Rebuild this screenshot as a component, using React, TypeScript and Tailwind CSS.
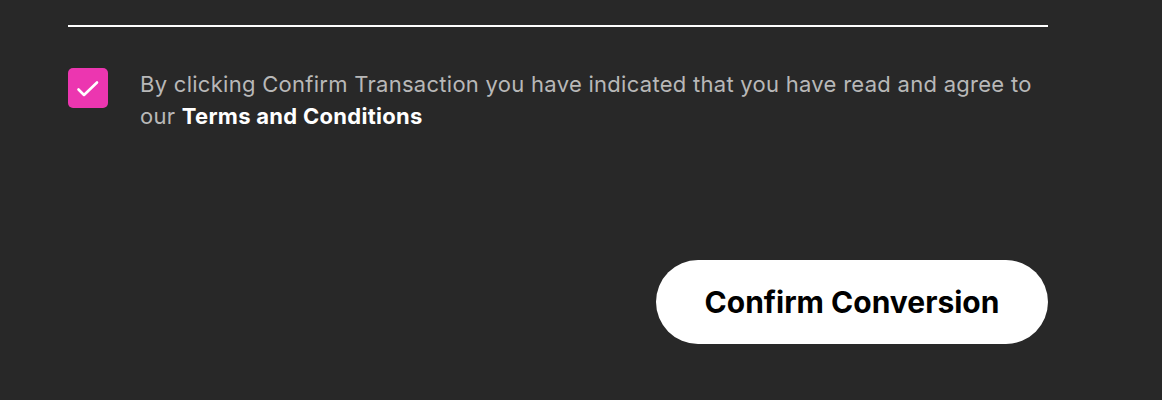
import React, { useState } from "react";

const App = () => {
  const [agreed, set_agreed] = useState(true);

  return (
    <div
      className="w-full h-[400px] bg-[#282828] pt-[25px]"
      style={{ fontFamily: "Inter, 'Noto Sans', sans-serif" }}
    >
      <div className="w-[980px] ml-[68px]">
        <div className="h-[2px] bg-white" />
        <div className="flex flex-row items-start mt-[41px]">
          <button
            className="w-10 h-10 shrink-0 rounded-[5px] bg-[#ec36b0] relative"
            onClick={() => set_agreed(!agreed)}
          >
            {agreed && (
              <svg className="absolute inset-0" width="40" height="40" viewBox="0 0 40 40" fill="none">
                <path
                  d="M10.5 21.5l5.5 5.5L29 14.5"
                  stroke="white"
                  strokeWidth="2.6"
                  strokeLinecap="round"
                  strokeLinejoin="round"
                />
              </svg>
            )}
          </button>
          <p className="ml-8 w-[900px] text-[22px] leading-[32px] text-[#b8b8b8] tracking-[0.28px]">
            By clicking Confirm Transaction you have indicated that you have read and agree to
            our <span className="font-bold text-white">Terms and Conditions</span>
          </p>
        </div>
        <div className="flex justify-end mt-[128px]">
          <button className="w-[392px] h-[84px] rounded-full bg-white text-black text-[30px] font-bold">
            Confirm Conversion
          </button>
        </div>
      </div>
    </div>
  );
};

export default App;
